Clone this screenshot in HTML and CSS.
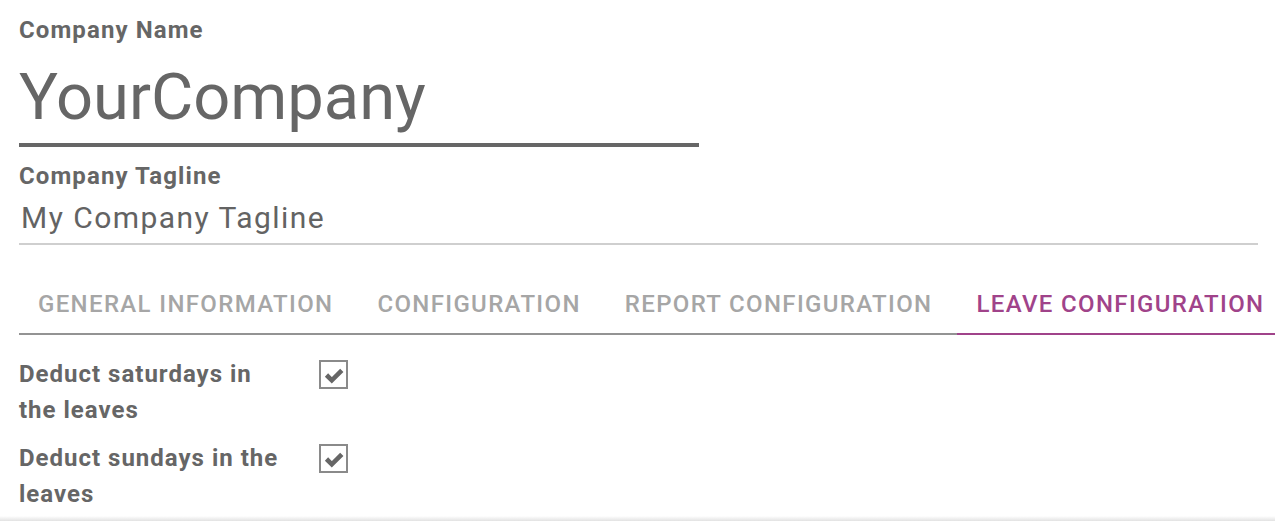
FILE: index.html
```html
<!DOCTYPE html>
<html>
<head>
<meta charset="utf-8">
<link rel="stylesheet" href="styles.css">
</head>
<body>
<div class="sheet">
  <div class="field-label">Company Name</div>
  <div class="title-input">YourCompany</div>
  <div class="field-label">Company Tagline</div>
  <div class="tagline-input">My Company Tagline</div>

  <div class="tabs">
    <div class="tab">General Information</div>
    <div class="tab">Configuration</div>
    <div class="tab">Report Configuration</div>
    <div class="tab active">Leave Configuration</div>
  </div>

  <div class="options">
    <div class="opt-label">Deduct saturdays in the leaves</div>
    <div class="opt-box">
      <span class="checkbox"><svg viewBox="0 0 28 28" width="28" height="28"><path d="M6.5 14 L11.8 19.3 L21.8 9.3" fill="none" stroke="#666" stroke-width="4.6" stroke-linecap="butt" stroke-linejoin="miter"/></svg></span>
    </div>
    <div class="opt-label">Deduct sundays in the leaves</div>
    <div class="opt-box">
      <span class="checkbox"><svg viewBox="0 0 28 28" width="28" height="28"><path d="M6.5 14 L11.8 19.3 L21.8 9.3" fill="none" stroke="#666" stroke-width="4.6" stroke-linecap="butt" stroke-linejoin="miter"/></svg></span>
    </div>
  </div>
</div>
<div class="bottom-shadow"></div>
</body>
</html>
```

FILE: styles.css
```css
html, body {
  margin: 0;
  padding: 0;
  overflow: hidden;
  background: #fff;
}
body {
  font-family: Roboto, "Noto Sans", sans-serif;
  color: #666;
  width: 1275px;
  height: 521px;
}
.sheet {
  padding: 15px 17px 0 19px;
}
.field-label {
  font-weight: 700;
  font-size: 24px;
  letter-spacing: 1.1px;
  line-height: 30px;
  color: #666;
}
.title-input {
  width: 680px;
  font-size: 65px;
  line-height: 76px;
  margin-top: 14px;
  padding-bottom: 8px;
  border-bottom: 4px solid #666;
  color: #666;
}
.title-input + .field-label {
  margin-top: 14px;
}
.tagline-input {
  font-size: 30px;
  letter-spacing: 1.45px;
  line-height: 36px;
  margin-top: 9px;
  padding-left: 2px;
  padding-bottom: 7px;
  border-bottom: 2px solid #cfcfcf;
  color: #636363;
}
.tabs {
  display: flex;
  gap: 4px;
  margin-top: 39px;
  border-bottom: 2px solid #939393;
  white-space: nowrap;
}
.tab {
  font-size: 24px;
  font-weight: 500;
  letter-spacing: 1.35px;
  line-height: 40px;
  padding: 0 21px 9px 19px;
  text-transform: uppercase;
  color: #a6a6a6;
  margin-bottom: -2px;
  border-bottom: 2px solid transparent;
  flex: none;
}
.tab.active {
  color: #a0438a;
  border-bottom-color: #a0438a;
}
.options {
  display: grid;
  grid-template-columns: 300px auto;
  row-gap: 12px;
  margin-top: 21px;
}
.opt-label {
  font-weight: 700;
  font-size: 24px;
  letter-spacing: 1px;
  line-height: 36px;
  padding-right: 35px;
  color: #666;
}
.opt-box {
  padding-top: 4px;
}
.checkbox {
  display: block;
  width: 25px;
  height: 25px;
  border: 2px solid #8a8a8a;
  position: relative;
}
.checkbox svg {
  position: absolute;
  left: -1px;
  top: -1px;
}
.bottom-shadow {
  position: fixed;
  left: 0;
  right: 0;
  bottom: 0;
  height: 5px;
  background: linear-gradient(#ffffff, #e2e2e2);
}
```
